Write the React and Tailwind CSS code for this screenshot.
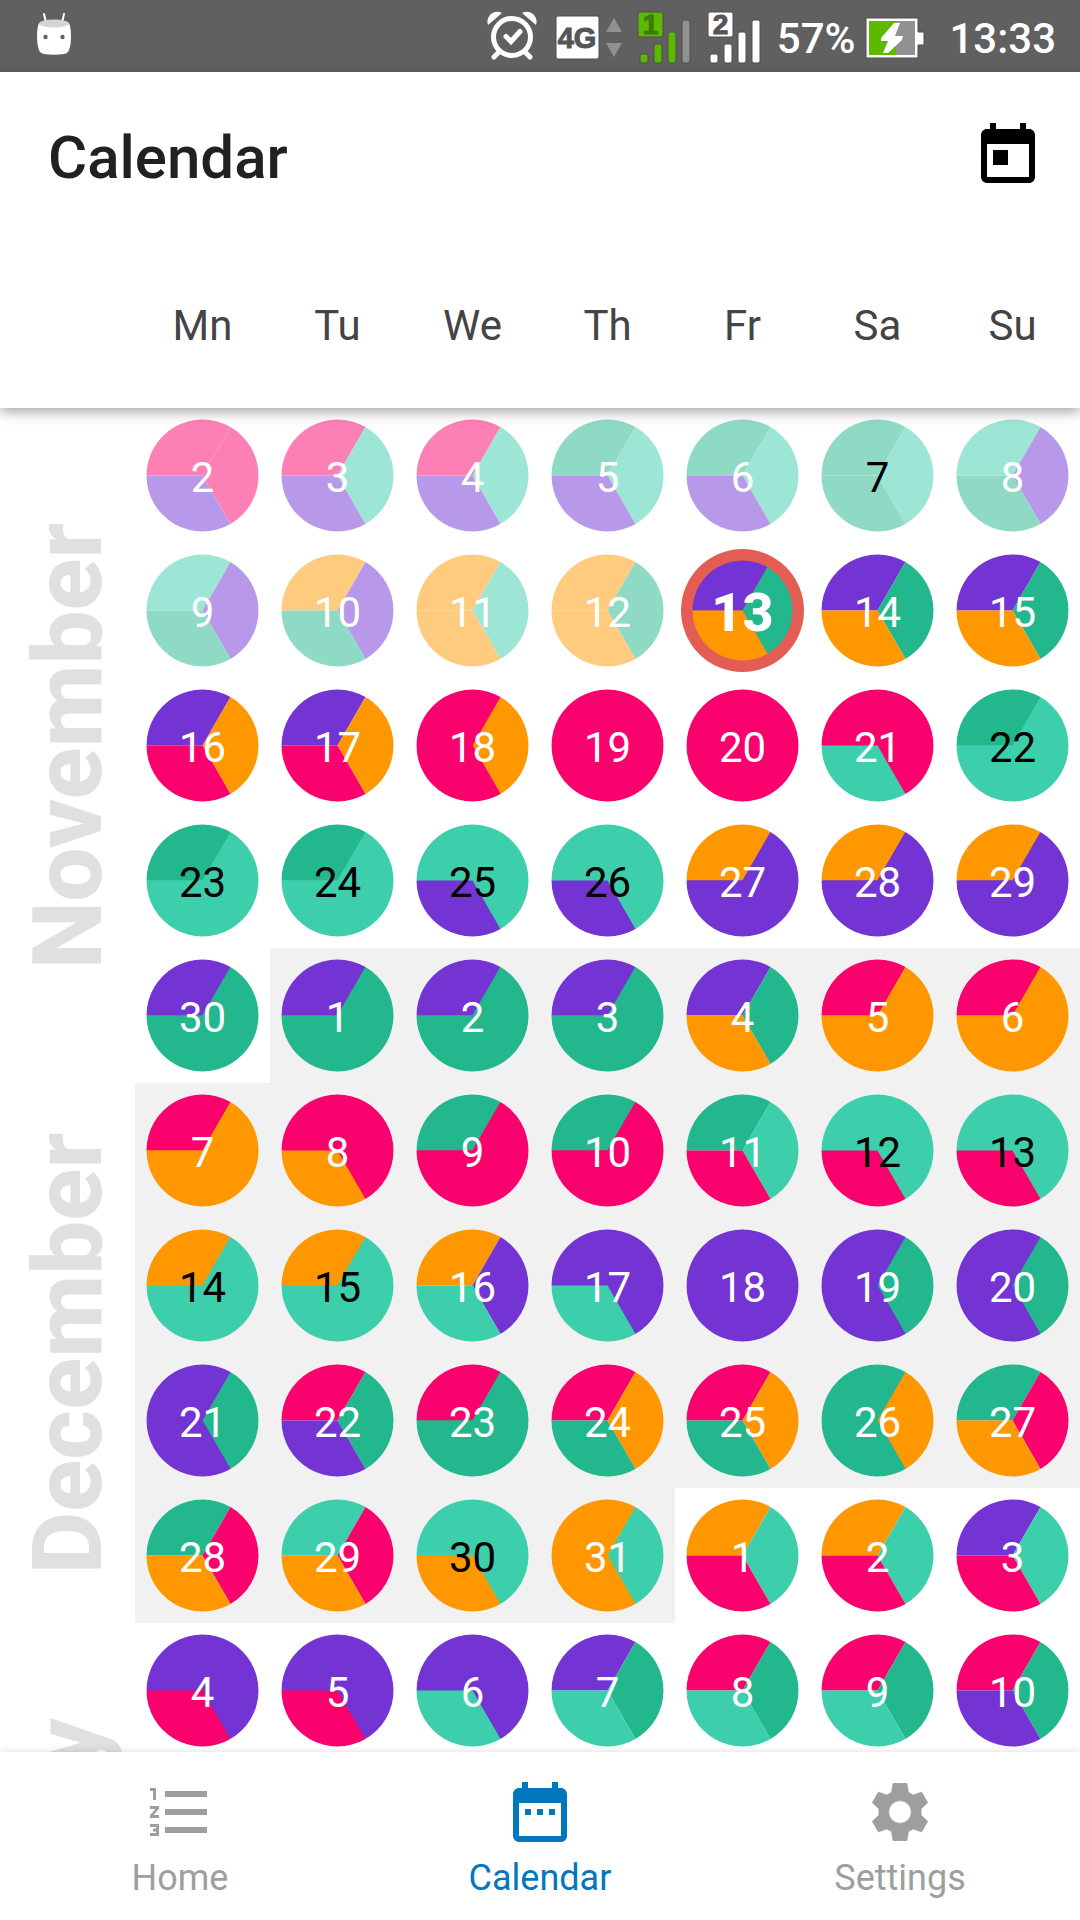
import { MdToday, MdDateRange, MdFormatListNumbered } from "react-icons/md";

const COLORS = {
  K: "#fa026d",
  P: "#7434d3",
  O: "#ff9800",
  G: "#22b78d",
  L: "#3dcfac",
};

const WEEKDAYS = ["Mn", "Tu", "We", "Th", "Fr", "Sa", "Su"];

// Each code names the colours of the top, right and bottom shifts of one day.
const MONTHS = [
  {
    name: "November",
    span: "row-span-5",
    first: 2,
    codes: "KKP KLP KLP GLP GLP GLG LPG LPG OPG OLO OGO PGO PGO PGO POK POK KOK KKK KKK KKL GLL GLL GLL LLP LLP OPP OPP OPP PGG".split(" "),
  },
  {
    name: "December",
    span: "row-span-4",
    first: 1,
    codes: "PGG PGG PGG PGO KOO KOO KOO KKO GKK GKK GLK LLK LLK OLL OLL OPL PPL PPP PGP PGP PGP KGP KGG KOG KOG GOG GKO GKO LKO LLO OLO".split(" "),
  },
  {
    name: "January",
    span: "row-span-4",
    first: 1,
    codes: "OLK OLK PLK PPK PPK PPL PGL KGL KGL KGP".split(" "),
  },
];

const DAYS = MONTHS.flatMap((month, monthIndex) =>
  month.codes.map((code, i) => ({ month: month.name, monthIndex, number: month.first + i, code }))
);

const DARK_TEXT = new Set(["0-7", "0-22", "0-23", "0-24", "0-25", "0-26", "1-12", "1-13", "1-14", "1-15", "1-30"]);

// Week row index at which each month's label opens.
const LABEL_ROWS = { 0: 0, 5: 1, 9: 2 };

function Pie({ code, today, past }) {
  const r = today ? 50 : 56;
  const dx = r / 2;
  const dy = r * 0.866;
  const repeated = [...code].find((c, i) => code.indexOf(c) !== i || code.lastIndexOf(c) !== i);
  return (
    <svg viewBox="0 0 135 135" className="col-start-1 row-start-1 size-full" aria-hidden="true">
      {today && <circle cx="67.5" cy="67.5" r="61.5" fill="#e45d55" />}
      <g transform="translate(67.5 67.5)">
        {repeated && !past && <circle r={r - 1} fill={COLORS[repeated]} />}
        <path d={`M0 0L${-r} 0A${r} ${r} 0 0 1 ${dx} ${-dy}Z`} fill={COLORS[code[0]]} />
        <path d={`M0 0L${dx} ${-dy}A${r} ${r} 0 0 1 ${dx} ${dy}Z`} fill={COLORS[code[1]]} />
        <path d={`M0 0L${dx} ${dy}A${r} ${r} 0 0 1 ${-r} 0Z`} fill={COLORS[code[2]]} />
      </g>
    </svg>
  );
}

function Day({ day }) {
  const today = day.monthIndex === 0 && day.number === 13;
  const past = day.monthIndex === 0 && day.number < 13;
  const dark = DARK_TEXT.has(`${day.monthIndex}-${day.number}`);
  return (
    <button
      type="button"
      aria-label={`${day.month} ${day.number}`}
      aria-current={today ? "date" : undefined}
      className={`grid size-full place-items-center ${day.monthIndex === 1 ? "bg-[#f1f1f1]" : "bg-white"}`}
    >
      <span className={`col-start-1 row-start-1 size-full ${past ? "opacity-50" : ""}`}>
        <Pie code={day.code} today={today} past={past} />
      </span>
      <span
        className={`z-10 col-start-1 row-start-1 pt-1 ${today ? "text-[54px] font-extrabold" : "text-[42px]"} ${dark ? "text-black" : "text-white"}`}
      >
        {day.number}
      </span>
    </button>
  );
}

function AndroidIcon() {
  return (
    <svg viewBox="0 0 36 44" className="mb-1 ml-9 h-11 w-9" aria-hidden="true">
      <path d="M8 2L10 11M28 2L26 11" stroke="#fff" strokeWidth="2" strokeLinecap="round" />
      <path d="M3 11Q1 16 1 24Q1 33 3 38Q4 41 8 42Q18 43.500 28 42Q32 41 33 38Q35 33 35 24Q35 16 33 11Z" fill="#fff" />
      <ellipse cx="18" cy="11.500" rx="15" ry="4" fill="#d4d4d4" />
      <circle cx="9.500" cy="25" r="2.200" fill="#606060" />
      <circle cx="26.500" cy="25" r="2.200" fill="#606060" />
    </svg>
  );
}

function AlarmIcon() {
  return (
    <svg viewBox="0 0 50 50" className="size-[50px]" aria-hidden="true" fill="none" stroke="#fff" strokeLinecap="round">
      <circle cx="25" cy="26" r="18.500" strokeWidth="5" />
      <path d="M12 41L7 46M38 41L43 46" strokeWidth="5" />
      <path d="M19 25.500L24 30.500L33 20.500" strokeWidth="5" />
      <path d="M1 14Q-1 8 4 3Q9 -1 15 2ZM49 14Q51 8 46 3Q41 -1 35 2Z" fill="#fff" stroke="none" />
    </svg>
  );
}

function Signal({ sim, color, last, digit }) {
  return (
    <svg viewBox="0 0 56 54" className="mt-1 h-[54px] w-14" role="img" aria-label={`SIM ${sim} signal`}>
      <g stroke="#4c4c4c" strokeWidth="1">
        <rect x="1" y="1" width="25" height="25" rx="2" fill={color} />
        <rect x="3" y="43" width="8" height="9" rx="2" fill={color} />
        <rect x="17" y="33" width="8" height="19" rx="2" fill={color} />
        <rect x="31" y="21" width="8" height="31" rx="2" fill={color} />
        <rect x="45" y="9" width="8" height="43" rx="2" fill={last} />
      </g>
      <text x="13.500" y="23" textAnchor="middle" className="text-[28px] font-bold" fill={digit} stroke={digit} strokeWidth="1" fontFamily="Liberation Sans, sans-serif">
        {sim}
      </text>
    </svg>
  );
}

function StatusBar() {
  return (
    <header className="flex h-[72px] shrink-0 items-center bg-[#606060] text-[42px] leading-none font-medium text-white">
      <AndroidIcon />
      <div className="ml-auto flex items-center pr-6">
        <AlarmIcon />
        <svg viewBox="0 0 68 48" className="mt-1 ml-[18px] h-12 w-[68px]" role="img" aria-label="4G">
          <rect x="1" y="2" width="43" height="43" rx="2" fill="#fff" stroke="#4c4c4c" />
          <text x="22" y="34" textAnchor="middle" className="text-[29px] font-bold" fill="#555" stroke="#555" strokeWidth="1" fontFamily="Liberation Sans, sans-serif">4G</text>
          <path d="M51 18L59 4L67 18ZM51 29L59 43L67 29Z" fill="#919191" />
        </svg>
        <div className="ml-3.5">
          <Signal sim="1" color="#5cb900" last="#919191" digit="#3f7a08" />
        </div>
        <div className="ml-3.5">
          <Signal sim="2" color="#ffffff" last="#ffffff" digit="#555555" />
        </div>
        <span className="mt-1.5 ml-3.5">57%</span>
        <svg viewBox="0 0 60 42" className="mt-1 ml-2.5 h-[42px] w-[60px]" role="img" aria-label="Battery charging">
          <path d="M1 1H53V15H59V28H53V41H1Z" fill="#fff" stroke="#4c4c4c" />
          <path d="M4 4H31V38H4Z" fill="#5cb900" />
          <path d="M31 4H50V38H31Z" fill="#919191" />
          <path d="M29 6H35L30 19H38L37 23L23 36H18L23 24H16V21Z" fill="#fff" />
        </svg>
        <time className="mt-1.5 ml-6">13:33</time>
      </div>
    </header>
  );
}

function GearIcon({ className }) {
  return (
    <svg viewBox="0 0 24 24" className={className} fill="currentColor" stroke="currentColor" strokeWidth="0.3" strokeLinejoin="round" aria-hidden="true">
      <path d="M9.700 2.500H14.300L14.800 5.500L16.400 6.400L19.200 5.400L21.200 8.900L19 10.900V13.100L21.200 15.100L19.200 18.600L16.400 17.600L14.800 18.500L14.300 21.500H9.700L9.200 18.500L7.600 17.600L4.800 18.600L2.800 15.100L5 13.100V10.900L2.800 8.900L4.800 5.400L7.600 6.400L9.200 5.500ZM12 8.200A3.800 3.800 0 0 0 12 15.800A3.800 3.800 0 0 0 12 8.200Z" />
    </svg>
  );
}

const TABS = [
  { label: "Home", Icon: MdFormatListNumbered },
  { label: "Calendar", Icon: MdDateRange, active: true },
  { label: "Settings", Icon: GearIcon },
];

export default function App() {
  return (
    <div className="flex h-screen flex-col overflow-hidden bg-white font-['Roboto',sans-serif]">
      <StatusBar />
      <div className="z-20 shrink-0 bg-white shadow-[0_4px_12px_rgba(0,0,0,0.35)]">
        <div className="flex h-42 items-center justify-between pr-9 pl-12">
          <h1 className="pt-1 text-6xl font-medium text-[#212121]">Calendar</h1>
          <button type="button" aria-label="Today" className="text-black">
            <MdToday className="size-[72px]" />
          </button>
        </div>
        <div className="grid h-42 grid-cols-8 items-center pt-0.5 text-center text-[42px] text-[#444]">
          {WEEKDAYS.map((day, i) => (
            <span key={day} className={i === 0 ? "col-start-2" : ""}>
              {day}
            </span>
          ))}
        </div>
      </div>

      <main className="min-h-0 flex-1 overflow-y-auto [scrollbar-width:none]">
        <div className="grid auto-rows-[12.5vw] grid-cols-8">
          {DAYS.map((day, i) => {
            const month = i % 7 === 0 ? MONTHS[LABEL_ROWS[i / 7]] : undefined;
            return [
              month && (
                <h2
                  key={month.name}
                  className={`col-start-1 flex rotate-180 items-center justify-center text-8xl font-extrabold text-[#e0e0e0] [writing-mode:vertical-rl] ${month.span}`}
                >
                  {month.name}
                </h2>
              ),
              <Day key={`${day.month}-${day.number}`} day={day} />,
            ];
          })}
        </div>
      </main>

      <nav className="z-20 grid h-42 shrink-0 grid-cols-3 bg-white shadow-[0_0_8px_rgba(0,0,0,0.15)]">
        {TABS.map(({ label, Icon, active }) => (
          <a
            key={label}
            href={`#${label.toLowerCase()}`}
            aria-current={active ? "page" : undefined}
            className={`flex flex-col items-center gap-2.5 pt-6 text-4xl ${active ? "text-[#0277bd]" : "text-[#9e9e9e]"}`}
          >
            <Icon className="size-[72px]" />
            <span>{label}</span>
          </a>
        ))}
      </nav>
    </div>
  );
}
